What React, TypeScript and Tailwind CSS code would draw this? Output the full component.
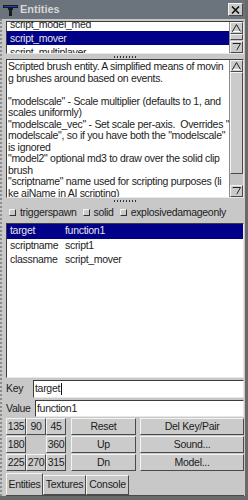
const raised =
  "border border-t-[#f4f4f4] border-l-[#f4f4f4] border-b-[#4a4a4a] border-r-[#4a4a4a] bg-[#cbcbcb]";
const sunken =
  "border border-t-[#3c3c3c] border-l-[#3c3c3c] border-b-[#e8e8e8] border-r-[#e8e8e8]";

const description = [
  "Scripted brush entity. A simplified means of movin",
  "g brushes around based on events.",
  "",
  "\"modelscale\" - Scale multiplier (defaults to 1, and",
  "scales uniformly)",
  "\"modelscale_vec\" - Set scale per-axis.  Overrides \"",
  "modelscale\", so if you have both the \"modelscale\"",
  "is ignored",
  "\"model2\" optional md3 to draw over the solid clip",
  "brush",
  "\"scriptname\" name used for scripting purposes (li",
  "ke aiName in AI scripting)",
];

const pairs = [
  { key: "target", value: "function1" },
  { key: "scriptname", value: "script1" },
  { key: "classname", value: "script_mover" },
];

function ArrowUp() {
  return (
    <svg width="9" height="8" viewBox="0 0 9 8">
      <path d="M4.5 0.5 L8.5 7.5 L0.5 7.5 Z" fill="none" stroke="#222" strokeWidth="1" />
      <path d="M1 7.5 H8.5" stroke="#fff" strokeWidth="1" />
    </svg>
  );
}

function ArrowDown() {
  return (
    <svg width="9" height="8" viewBox="0 0 9 8">
      <path d="M0.5 0.5 L8.5 0.5 L4.5 7.5 Z" fill="none" stroke="#222" strokeWidth="1" />
      <path d="M0.5 0.5 L4.5 7.5" stroke="#fff" strokeWidth="1" />
    </svg>
  );
}

function ScrollBar({ thumb }: { thumb: number | null }) {
  return (
    <div className="flex w-[14px] flex-col border-l border-[#8a8a8a] bg-[#c4c4c4]">
      <div className={`${raised} flex h-[12px] items-center justify-center`}>
        <ArrowUp />
      </div>
      <div className="flex flex-1 flex-col justify-start">
        {thumb !== null && <div className={`${raised}`} style={{ height: thumb }} />}
      </div>
      <div className={`${raised} flex h-[12px] items-center justify-center`}>
        <ArrowDown />
      </div>
    </div>
  );
}

function Splitter({ h }: { h: string }) {
  return (
    <div className={`flex ${h} items-center justify-center`}>
      <div className="flex gap-[2px]">
        {[0, 1, 2, 3, 4, 5, 6, 7].map((i) => (
          <div key={i} className="h-[2px] w-[1px] bg-[#333]" />
        ))}
      </div>
    </div>
  );
}

function Check({ label }: { label: string }) {
  return (
    <div className="flex items-center gap-[4px]">
      <div className="h-[7px] w-[7px] border border-t-[#f4f4f4] border-l-[#f4f4f4] border-b-[#333] border-r-[#333] bg-[#cbcbcb]" />
      <span>{label}</span>
    </div>
  );
}

function Btn({ children, className }: { children?: React.ReactNode; className?: string }) {
  return (
    <div className={`${raised} flex h-[17px] items-center justify-center ${className ?? ""}`}>
      {children}
    </div>
  );
}

export default function App() {
  return (
    <div
      className="flex h-[500px] w-[248px] flex-col overflow-hidden border-r-[3px] border-b-[4px] border-r-[#6a6a6a] border-b-[#6a6a6a] bg-[#c8c8c8] text-[10.5px] tracking-[-0.3px] text-[#1c1c1c]"
      style={{ fontFamily: "'Liberation Sans', Arial, sans-serif" }}
    >
      {/* title bar */}
      <div className="flex h-[19px] shrink-0 items-center bg-[#6b737d] pl-[3px] pr-[2px]">
        <svg width="15" height="12" viewBox="0 0 15 12">
          <rect x="0" y="1" width="15" height="3" fill="#1a1a1a" />
          <rect x="1" y="2" width="13" height="1" fill="#1f3fd0" />
          <rect x="5" y="4" width="5" height="2" fill="#1a1a1a" />
          <rect x="6" y="6" width="3" height="6" fill="#1a1a1a" />
        </svg>
        <span className="ml-[2px] text-[11px] font-bold tracking-normal text-[#d6d6d6]">Entities</span>
        <div className="flex-1" />
        <div className={`${raised} flex h-[13px] w-[15px] items-center justify-center`}>
          <svg width="9" height="8" viewBox="0 0 9 8">
            <path d="M1 0.5 L8 7.5 M8 0.5 L1 7.5" stroke="#111" strokeWidth="1.6" />
          </svg>
        </div>
      </div>

      <div className="flex flex-1 flex-row">
        {/* dotted left edge */}
        <div className="mr-[4px] w-[3px] border-l-2 border-dotted border-[#8c8c8c]" />

        <div className="flex flex-1 flex-col pr-[2px]">
          {/* entity class list */}
          <div className={`mt-[2px] flex h-[33px] ${sunken}`}>
            <div className="flex-1 overflow-hidden bg-white">
              <div className="-mt-[5px] flex flex-col">
                <div className="h-[14px] pl-[3px] leading-[14px]">script_model_med</div>
                <div className="h-[14px] bg-[#000088] pl-[3px] leading-[14px] text-[#e6e6e6]">script_mover</div>
                <div className="h-[14px] pl-[3px] leading-[14px]">script_multiplayer</div>
              </div>
            </div>
            <ScrollBar thumb={6} />
          </div>

          <Splitter h="h-[5px]" />

          {/* description */}
          <div className={`flex h-[139px] ${sunken}`}>
            <div className="flex-1 overflow-hidden bg-white pl-[1px] pt-[1px] leading-[11.5px] whitespace-pre">
              {description.map((l, i) => (
                <div key={i} className="h-[11.5px]">
                  {l}
                </div>
              ))}
            </div>
            <ScrollBar thumb={102} />
          </div>

          <Splitter h="h-[6px]" />

          {/* flags */}
          <div className="flex h-[17px] items-center gap-[6px] pl-[3px]">
            <Check label="triggerspawn" />
            <Check label="solid" />
            <Check label="explosivedamageonly" />
          </div>

          {/* key / value pairs */}
          <div className={`mt-[2px] h-[155px] bg-white ${sunken}`}>
            {pairs.map((p, i) => (
              <div
                key={p.key}
                className={`flex h-[14.5px] items-center pl-[3px] ${i === 0 ? "bg-[#000088] text-[#e6e6e6]" : ""}`}
              >
                <span className="w-[55px]">{p.key}</span>
                <span>{p.value}</span>
              </div>
            ))}
          </div>

          {/* key / value inputs */}
          <div className="mt-[2px] flex h-[18px] items-center">
            <span className="w-[27px]">Key</span>
            <div className={`flex h-[18px] flex-1 items-center bg-white pl-[1px] ${sunken}`}>
              target<span className="ml-[1px] h-[12px] w-[1px] bg-[#111]" />
            </div>
          </div>
          <div className="mt-[2px] flex h-[17px] items-center">
            <span className="w-[29px]">Value</span>
            <div className={`flex h-[17px] flex-1 items-center bg-white pl-[1px] ${sunken}`}>function1</div>
          </div>

          {/* buttons */}
          <div className="mt-[1px] grid grid-cols-[20px_20px_20px_70px_1fr] gap-x-[0px] gap-y-[1px]">
            <Btn>135</Btn>
            <Btn>90</Btn>
            <Btn>45</Btn>
            <Btn className="ml-[5px]">Reset</Btn>
            <Btn className="ml-[4px]">Del Key/Pair</Btn>

            <Btn>180</Btn>
            <div />
            <Btn>360</Btn>
            <Btn className="ml-[5px]">Up</Btn>
            <Btn className="ml-[4px]">Sound...</Btn>

            <Btn>225</Btn>
            <Btn>270</Btn>
            <Btn>315</Btn>
            <Btn className="ml-[5px]">Dn</Btn>
            <Btn className="ml-[4px]">Model...</Btn>
          </div>

          {/* tabs */}
          <div className="mt-[3px] flex h-[22px] items-end border-b border-[#4a4a4a]">
            <div className="flex h-[22px] w-[37px] items-center justify-center border border-b-0 border-t-[#f4f4f4] border-l-[#f4f4f4] border-r-[#4a4a4a]">
              Entities
            </div>
            <div className="flex h-[20px] w-[43px] items-center justify-center border border-t-[#f4f4f4] border-l-[#f4f4f4] border-r-[#4a4a4a] border-b-[#4a4a4a]">
              Textures
            </div>
            <div className="flex h-[20px] w-[43px] items-center justify-center border border-t-[#f4f4f4] border-l-[#f4f4f4] border-r-[#4a4a4a] border-b-[#4a4a4a]">
              Console
            </div>
          </div>
        </div>
      </div>
    </div>
  );
}
